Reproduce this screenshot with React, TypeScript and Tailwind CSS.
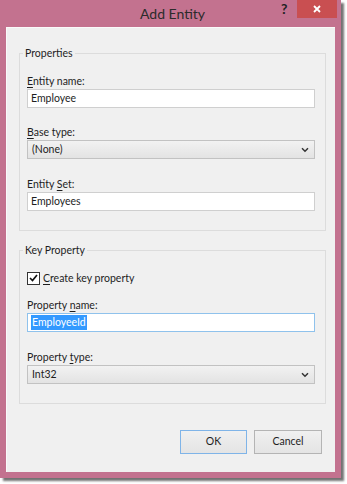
import type { ReactNode } from "react";

const FONT = { fontFamily: '"Segoe UI", Lato, "Noto Sans", sans-serif' };

function Key({ children }: { children: ReactNode }) {
  return <span className="underline underline-offset-2">{children}</span>;
}

function Chevron() {
  return (
    <svg width="8" height="6" viewBox="0 0 8 6" aria-hidden="true">
      <path d="M1 1.2 L4 4.2 L7 1.2" fill="none" stroke="#333" strokeWidth="1.5" />
    </svg>
  );
}

function TextBox({ value, focused }: { value: string; focused?: boolean }) {
  return (
    <div
      className={
        "flex h-[19px] items-center border bg-white pl-[3px] " +
        (focused ? "border-[#8fc2ec]" : "border-[#cfcfcf]")
      }
    >
      {focused ? (
        <span className="bg-[#3399ff] px-px leading-[15px] text-white">{value}</span>
      ) : (
        <span className="leading-[15px] text-[#1e1e1e]">{value}</span>
      )}
    </div>
  );
}

function Select({ value }: { value: string }) {
  return (
    <div className="flex h-[19px] items-center justify-between border border-[#c2c2c2] bg-gradient-to-b from-[#f2f2f2] to-[#e3e3e3] pl-[4px] pr-[5px]">
      <span className="leading-[15px] text-[#1e1e1e]">{value}</span>
      <Chevron />
    </div>
  );
}

function Label({ children, className = "" }: { children: ReactNode; className?: string }) {
  return <div className={"h-[14px] leading-[14px] text-[#1e1e1e] " + className}>{children}</div>;
}

function Group({ title, children }: { title: string; children: ReactNode }) {
  return (
    <fieldset className="ml-[12px] mr-[9px] border border-[#dcdcdc] pb-[19px] pl-[7px] pr-[10px]">
      <legend className="-ml-[4px] h-[14px] px-[2px] leading-[14px] text-[#1e1e1e]">{title}</legend>
      {children}
    </fieldset>
  );
}

function Button({ label, primary }: { label: string; primary?: boolean }) {
  return (
    <button
      type="button"
      className={
        "flex h-[24px] items-center justify-center border bg-gradient-to-b from-[#f0f0f0] to-[#e4e4e4] text-[#1e1e1e] " +
        (primary ? "w-[67px] border-[#7fb4e8]" : "w-[68px] border-[#b4b4b4]")
      }
    >
      {label}
    </button>
  );
}

export default function App() {
  return (
    <div className="h-[484px] w-[347px] bg-white text-[10.5px]" style={FONT}>
      <div className="flex h-[478px] w-[341px] flex-col bg-[#c3728f] shadow-[3px_3px_2px_rgba(0,0,0,0.55)]">
        <div className="relative flex h-[27px] shrink-0 items-center justify-center">
          <span className="ml-[4px] text-[14px] leading-none text-[#2b2b2b]">Add Entity</span>
          <span className="absolute left-[281px] top-[2px] text-[14px] font-bold leading-none text-[#222]">?</span>
          <div className="absolute right-[4px] top-0 flex h-[18px] w-[40px] items-center justify-center bg-[#c94f51]">
            <svg width="8" height="8" viewBox="0 0 8 8" aria-hidden="true">
              <path d="M1 1 L7 7 M7 1 L1 7" stroke="white" strokeWidth="1.8" />
            </svg>
          </div>
        </div>

        <div className="mx-[6px] mb-[6px] flex flex-1 flex-col border-l border-t border-[#fafafa] bg-[#f0f0f0]">
          <div className="mt-[18px]">
            <Group title="Properties">
              <Label className="mt-[14px]">
                <Key>E</Key>ntity name:
              </Label>
              <div className="mt-px">
                <TextBox value="Employee" />
              </div>
              <Label className="mt-[17px]">
                <Key>B</Key>ase type:
              </Label>
              <div className="mt-px">
                <Select value="(None)" />
              </div>
              <Label className="mt-[18px]">
                Entity <Key>S</Key>et:
              </Label>
              <div className="mt-px">
                <TextBox value="Employees" />
              </div>
            </Group>
          </div>

          <div className="mt-[12px]">
            <Group title="Key Property">
              <div className="mt-[14px] flex h-[14px] items-center gap-[3px]">
                <div className="flex h-[13px] w-[13px] items-center justify-center border border-[#333] bg-white">
                  <svg width="9" height="8" viewBox="0 0 9 8" aria-hidden="true">
                    <path d="M1 4 L3.5 6.5 L8 1" fill="none" stroke="#111" strokeWidth="1.7" />
                  </svg>
                </div>
                <span className="leading-[14px] text-[#1e1e1e]">
                  <Key>C</Key>reate key property
                </span>
              </div>
              <Label className="mt-[13px]">
                Property <Key>n</Key>ame:
              </Label>
              <div className="mt-px">
                <TextBox value="EmployeeId" focused />
              </div>
              <Label className="mt-[18px]">
                Property <Key>t</Key>ype:
              </Label>
              <div className="mt-px">
                <Select value="Int32" />
              </div>
            </Group>
          </div>

          <div className="mr-[13px] mt-[26px] flex justify-end gap-[7px]">
            <Button label="OK" primary />
            <Button label="Cancel" />
          </div>
        </div>
      </div>
    </div>
  );
}
